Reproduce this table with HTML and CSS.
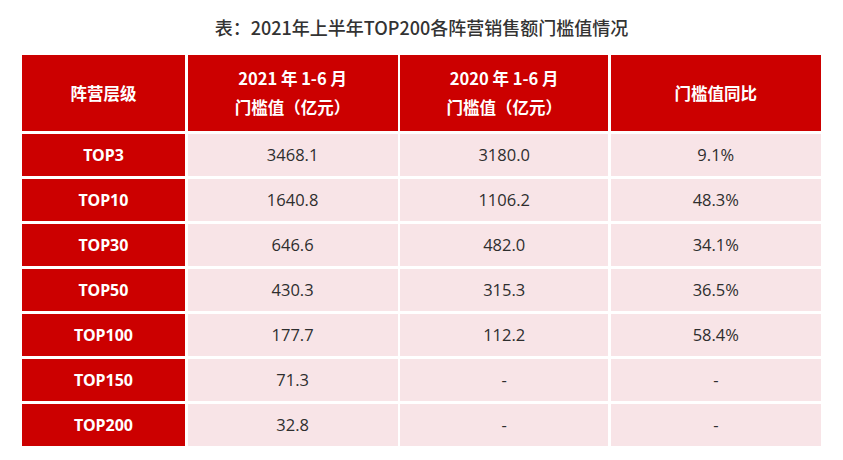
FILE: index.html
```html
<!DOCTYPE html>
<html lang="zh">
<head>
<meta charset="utf-8">
<link rel="stylesheet" href="styles.css">
</head>
<body>
<h1 class="title">表：2021年上半年TOP200各阵营销售额门槛值情况</h1>
<div class="table">
  <div class="th">阵营层级</div>
  <div class="th">2021 年 1-6 月<br>门槛值（亿元）</div>
  <div class="th">2020 年 1-6 月<br>门槛值（亿元）</div>
  <div class="th">门槛值同比</div>

  <div class="rh">TOP3</div><div class="td">3468.1</div><div class="td">3180.0</div><div class="td">9.1%</div>
  <div class="rh">TOP10</div><div class="td">1640.8</div><div class="td">1106.2</div><div class="td">48.3%</div>
  <div class="rh">TOP30</div><div class="td">646.6</div><div class="td">482.0</div><div class="td">34.1%</div>
  <div class="rh">TOP50</div><div class="td">430.3</div><div class="td">315.3</div><div class="td">36.5%</div>
  <div class="rh">TOP100</div><div class="td">177.7</div><div class="td">112.2</div><div class="td">58.4%</div>
  <div class="rh">TOP150</div><div class="td">71.3</div><div class="td">-</div><div class="td">-</div>
  <div class="rh">TOP200</div><div class="td">32.8</div><div class="td">-</div><div class="td">-</div>
</div>
</body>
</html>
```

FILE: styles.css
```css
html, body {
  margin: 0;
  padding: 0;
  background: #ffffff;
}
body {
  font-family: "Noto Sans CJK SC", "Noto Sans", sans-serif;
  color: #333333;
}
.title {
  margin: 0;
  padding-top: 15px;
  height: 40px;
  box-sizing: border-box;
  text-align: center;
  font-size: 18px;
  font-weight: 500;
  line-height: 24px;
  color: #333333;
}
.table {
  margin: 15px 0 0 22px;
  width: 799px;
  display: grid;
  grid-template-columns: 163px 210px 208px 210px;
  grid-template-rows: 76px repeat(7, 42.5px);
  column-gap: 2.6px;
  row-gap: 2.5px;
}
.th, .rh, .td {
  display: flex;
  align-items: center;
  justify-content: center;
  text-align: center;
}
.th {
  background: #cc0000;
  color: #ffffff;
  font-weight: 700;
  font-size: 16.5px;
  line-height: 29px;
}
.rh {
  background: #cc0000;
  color: #ffffff;
  font-family: "Noto Sans", "Open Sans", sans-serif;
  font-weight: 700;
  font-size: 16px;
}
.td {
  background: #f8e4e7;
  color: #2e2e2e;
  font-family: "Open Sans", "Noto Sans", sans-serif;
  font-size: 16.5px;
}
```
